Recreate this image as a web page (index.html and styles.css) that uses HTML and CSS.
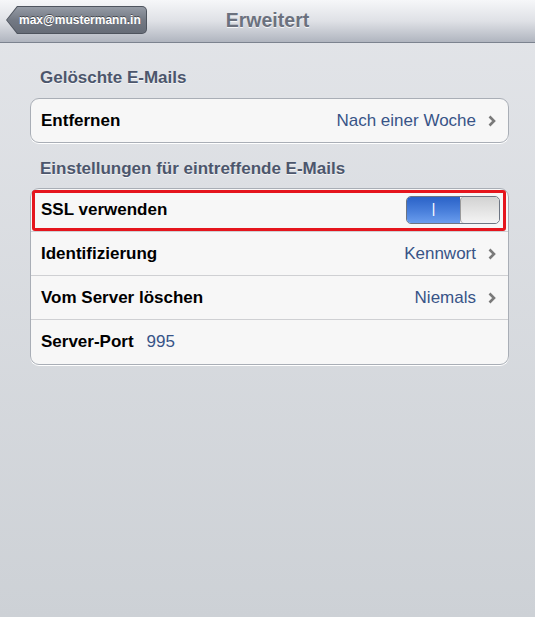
FILE: index.html
```html
<!DOCTYPE html>
<html lang="de">
<head>
  <meta charset="UTF-8" />
  <meta name="viewport" content="width=device-width, initial-scale=1.0" />
  <title>Erweitert</title>
  <link rel="stylesheet" href="styles.css">
</head>
<body>

  <div class="navbar">
    <a class="back-btn"><span class="back-inner">max@mustermann.in</span></a>
    <h1>Erweitert</h1>
  </div>

  <div class="content">
    <h2>Gelöschte E-Mails</h2>
    <div class="group">
      <div class="row">
        <span class="label">Entfernen</span>
        <span class="value">Nach einer Woche</span>
        <svg class="chevron" width="8" height="12" viewBox="0 0 8 12"><polyline points="1.5,1.5 6,6 1.5,10.5" fill="none" stroke="#7a7a7a" stroke-width="2.6"/></svg>
      </div>
    </div>

    <h2 class="second">Einstellungen für eintreffende E-Mails</h2>
    <div class="group">
      <div class="row highlight">
        <span class="label">SSL verwenden</span>
        <div class="switch">
          <span class="switch-on"><span class="switch-mark">I</span></span>
          <span class="switch-knob"></span>
        </div>
      </div>
      <div class="row">
        <span class="label">Identifizierung</span>
        <span class="value">Kennwort</span>
        <svg class="chevron" width="8" height="12" viewBox="0 0 8 12"><polyline points="1.5,1.5 6,6 1.5,10.5" fill="none" stroke="#7a7a7a" stroke-width="2.6"/></svg>
      </div>
      <div class="row">
        <span class="label">Vom Server löschen</span>
        <span class="value">Niemals</span>
        <svg class="chevron" width="8" height="12" viewBox="0 0 8 12"><polyline points="1.5,1.5 6,6 1.5,10.5" fill="none" stroke="#7a7a7a" stroke-width="2.6"/></svg>
      </div>
      <div class="row">
        <span class="label">Server-Port</span>
        <span class="value port">995</span>
      </div>
    </div>
  </div>

</body>
</html>
```

FILE: styles.css
```css
:root { --label-blue: #385487; --header: #4c566c; }
* { box-sizing: border-box; font-family: 'Liberation Sans', Arial, sans-serif; }
html, body { height: 100%; }
body { margin: 0; background: linear-gradient(#e3e5e9, #cdd1d6); color: #000; }

.navbar { height: 43px; position: relative; display: flex; align-items: center; justify-content: center; padding-bottom: 2px; background: linear-gradient(#f6f7f9, #dfe1e6 50%, #b0b5bf); border-bottom: 1px solid #7c838f; }
.navbar h1 { margin: 0; font-size: 19.5px; font-weight: bold; color: #6b717e; text-shadow: 0 1px 0 rgba(255,255,255,0.8); }
.back-btn { position: absolute; left: 6px; top: 6px; width: 141px; height: 28px; background: #4e545e; clip-path: polygon(11px 0, 100% 0, 100% 100%, 11px 100%, 0 50%); border-radius: 0 5px 5px 0; }
.back-inner { position: absolute; left: 1px; top: 1px; right: 1px; bottom: 1px; display: flex; align-items: center; padding-left: 12px; background: linear-gradient(#959ba5, #737984 50%, #666c77); clip-path: polygon(10.5px 0, 100% 0, 100% 100%, 10.5px 100%, 0 50%); border-radius: 0 4px 4px 0; color: #fff; font-size: 12px; font-weight: bold; text-shadow: 0 -1px 0 rgba(0,0,0,0.45); }

.content { padding: 25px 26px 0 30px; }
h2 { margin: 0 0 10px; padding-left: 10px; font-size: 17px; line-height: 20px; font-weight: bold; color: var(--header); text-shadow: 0 1px 0 rgba(255,255,255,0.7); }
h2.second { margin-top: 16px; margin-bottom: 9px; }

.group { background: #f7f7f7; border: 1px solid #a9aeb6; border-radius: 9px; box-shadow: 0 1px 0 #fff; }
.row { position: relative; display: flex; align-items: center; height: 44px; padding: 0 12px 0 10px; border-bottom: 1px solid #cfd0d3; }
.group .row:first-child { height: 43px; }
.row:last-child { border-bottom: none; }
.label { font-size: 17px; font-weight: bold; }
.value { margin-left: auto; font-size: 17px; color: var(--label-blue); }
.value.port { margin-left: 13px; }
.chevron { margin-left: 12px; }

.row.highlight::after { content: ''; position: absolute; left: 1px; top: 1px; right: 2px; bottom: 0; border: 3px solid #e5151d; border-radius: 3px; }

.switch { margin-left: auto; margin-right: -4px; display: flex; width: 94px; height: 28px; border: 1px solid #6d7583; border-radius: 5px; overflow: hidden; }
.switch-on { width: 53px; display: flex; align-items: center; justify-content: center; background: linear-gradient(#2a62c7, #4a80dc 55%, #6a9ded); color: #fff; font-size: 18px; }
.switch-mark { display: inline-block; transform: scaleX(0.7); }
.switch-knob { flex: 1; background: linear-gradient(#d2d2d2, #f4f4f4); border-left: 1px solid #9a9a9a; border-radius: 4px; }
```
